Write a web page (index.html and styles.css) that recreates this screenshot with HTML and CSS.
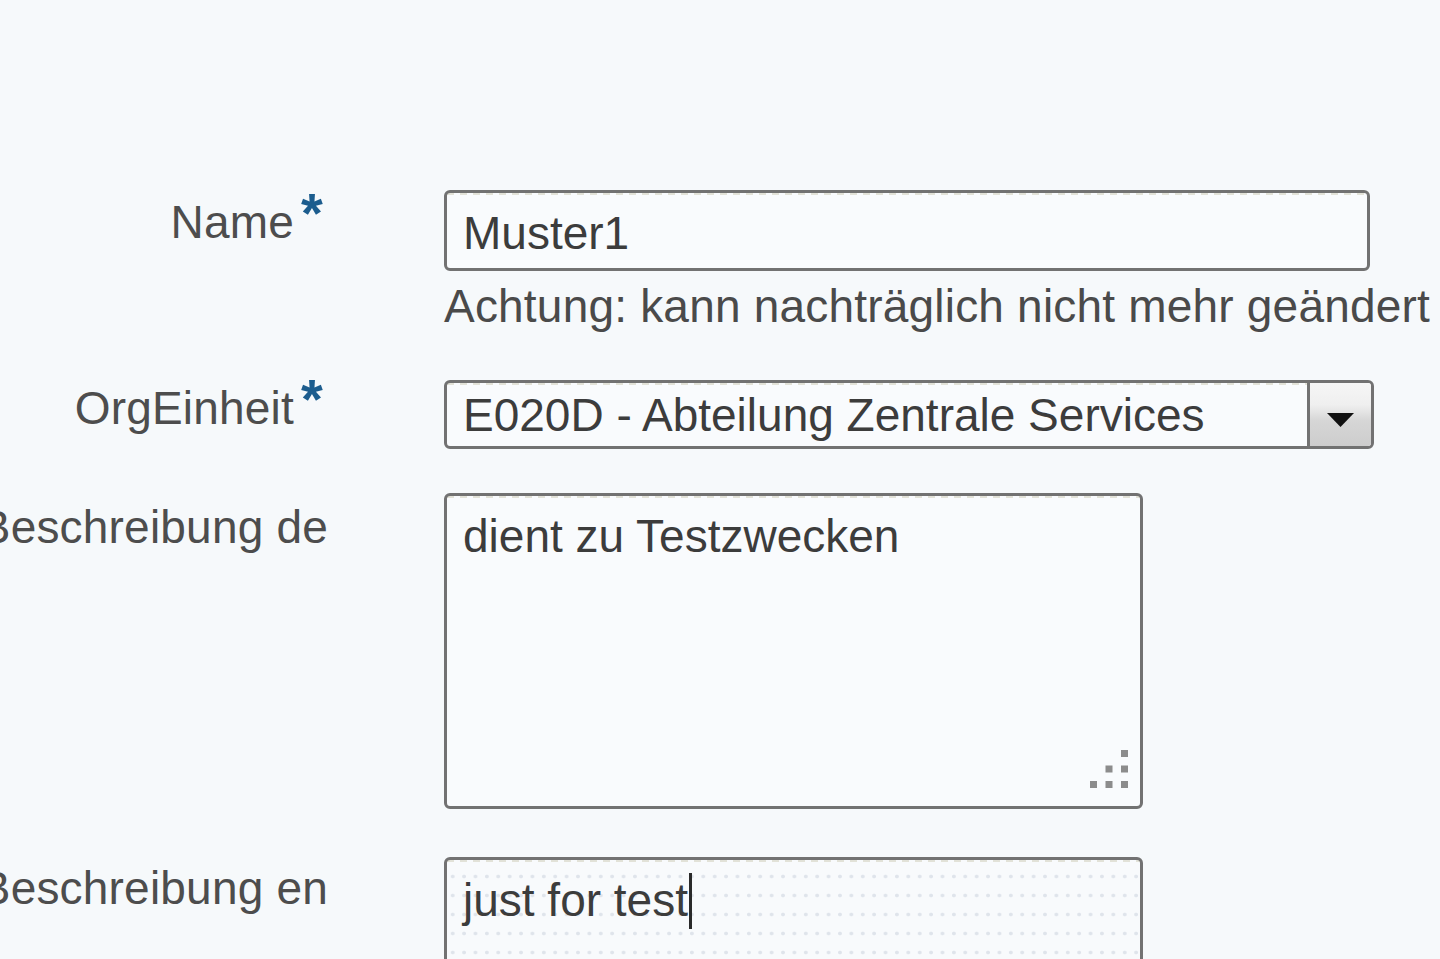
FILE: index.html
```html
<!DOCTYPE html>
<html lang="de">
<head>
<meta charset="utf-8">
<title>Formular</title>
<link rel="stylesheet" href="styles.css">
</head>
<body>
<main class="form">
  <div class="row row-name">
    <div class="lbl"><span class="lbl-text">Name</span><span class="req">*</span></div>
    <div class="field">
      <div class="ctl input">Muster1</div>
      <div class="hint">Achtung: kann nachträglich nicht mehr geändert werden</div>
    </div>
  </div>

  <div class="row row-org">
    <div class="lbl"><span class="lbl-text">OrgEinheit</span><span class="req">*</span></div>
    <div class="field">
      <div class="ctl select">
        <span class="select-value">E020D - Abteilung Zentrale Services</span>
        <span class="select-btn">
          <svg class="select-arrow" width="27" height="14" viewBox="0 0 27 14"><path d="M0 0H27L13.5 14Z" fill="#111"/></svg>
        </span>
      </div>
    </div>
  </div>

  <div class="row row-de">
    <div class="lbl"><span class="lbl-text">Beschreibung de</span></div>
    <div class="field">
      <div class="ctl area area-de">dient zu Testzwecken
        <svg class="grip" width="38" height="38" viewBox="0 0 38 38">
          <rect x="31" y="0" width="7" height="7" fill="#8c8c8c"/>
          <rect x="15.5" y="15.5" width="7" height="7" fill="#8c8c8c"/>
          <rect x="31" y="15.5" width="7" height="7" fill="#8c8c8c"/>
          <rect x="0" y="31" width="7" height="7" fill="#8c8c8c"/>
          <rect x="15.5" y="31" width="7" height="7" fill="#8c8c8c"/>
          <rect x="31" y="31" width="7" height="7" fill="#8c8c8c"/>
        </svg>
      </div>
    </div>
  </div>

  <div class="row row-en">
    <div class="lbl"><span class="lbl-text">Beschreibung en</span></div>
    <div class="field">
      <div class="ctl area area-en">just for test<span class="caret"></span></div>
    </div>
  </div>
</main>
</body>
</html>
```

FILE: styles.css
```css
html, body {
  margin: 0;
  padding: 0;
  overflow: hidden;
  background: #f6f9fb;
}

body {
  font-family: "Liberation Sans", Arial, sans-serif;
  font-size: 46px;
  line-height: 53px;
  letter-spacing: 0.2px;
  color: #4a4a4a;
  width: 1440px;
  height: 959px;
}

.form {
  display: flex;
  flex-direction: column;
  padding-top: 190px;
}

.row {
  display: grid;
  grid-template-columns: 328px 1fr;
  column-gap: 116px;
  align-items: start;
}

.lbl {
  display: flex;
  justify-content: flex-end;
  align-items: flex-start;
  white-space: nowrap;
  color: #4d4d4d;
  min-width: 0;
}

.req {
  color: #1c5d8e;
  font-weight: bold;
  font-size: 56px;
  line-height: 40px;
  margin-left: 7px;
  margin-right: 5px;
  margin-top: -3px;
  height: 40px;
}

.field {
  min-width: 0;
}

.ctl {
  box-sizing: border-box;
  border: 3px solid #727272;
  border-radius: 6px;
  background-color: #f9fbfd;
  background-image: repeating-linear-gradient(90deg, #e2e2d8 0 7px, transparent 7px 13px);
  background-size: 100% 2px;
  background-repeat: no-repeat;
  color: #3c3c3c;
  letter-spacing: 0;
  padding-left: 16px;
  white-space: nowrap;
}

/* Name */
.row-name .lbl { padding-top: 6px; }
.input {
  width: 926px;
  height: 81px;
  padding-top: 14px;
}
.hint {
  margin-top: 9px;
  white-space: nowrap;
  color: #4a4a4a;
}

/* OrgEinheit */
.row-org { margin-top: 47px; }
.row-org .lbl { padding-top: 2px; }
.select {
  width: 930px;
  height: 69px;
  padding-top: 6px;
  display: flex;
  justify-content: space-between;
  align-items: flex-start;
  padding-right: 0;
  overflow: hidden;
}
.select-btn {
  box-sizing: border-box;
  width: 64px;
  height: 63px;
  margin-top: -6px;
  border-left: 3px solid #727272;
  background: linear-gradient(#f6f6f6 0%, #efefef 35%, #d6d6d6 60%, #cdcdcd 100%);
  display: flex;
  justify-content: center;
  align-items: flex-start;
  padding-top: 30px;
}
.select-arrow { display: block; }

/* Beschreibung de */
.row-de { margin-top: 44px; }
.row-de .lbl { padding-top: 8px; }
.area {
  position: relative;
  width: 699px;
}
.area-de {
  height: 316px;
  padding-top: 14px;
}
.grip {
  position: absolute;
  right: 12px;
  bottom: 18px;
}

/* Beschreibung en */
.row-en { margin-top: 48px; }
.row-en .lbl { padding-top: 5px; }
.area-en {
  height: 220px;
  padding-top: 13px;
  background-color: #f8fafc;
  background-image:
    repeating-linear-gradient(90deg, #e2e2d8 0 7px, transparent 7px 13px),
    radial-gradient(circle, #dfe4eb 1.5px, transparent 2.2px);
  background-size: 100% 2px, 11.4px 19px;
  background-repeat: no-repeat, repeat;
  background-position: 0 0, 0 7px;
}
.caret {
  display: inline-block;
  width: 3px;
  height: 56px;
  background: #2a2a2a;
  vertical-align: -13px;
  margin-left: 1px;
}
```
